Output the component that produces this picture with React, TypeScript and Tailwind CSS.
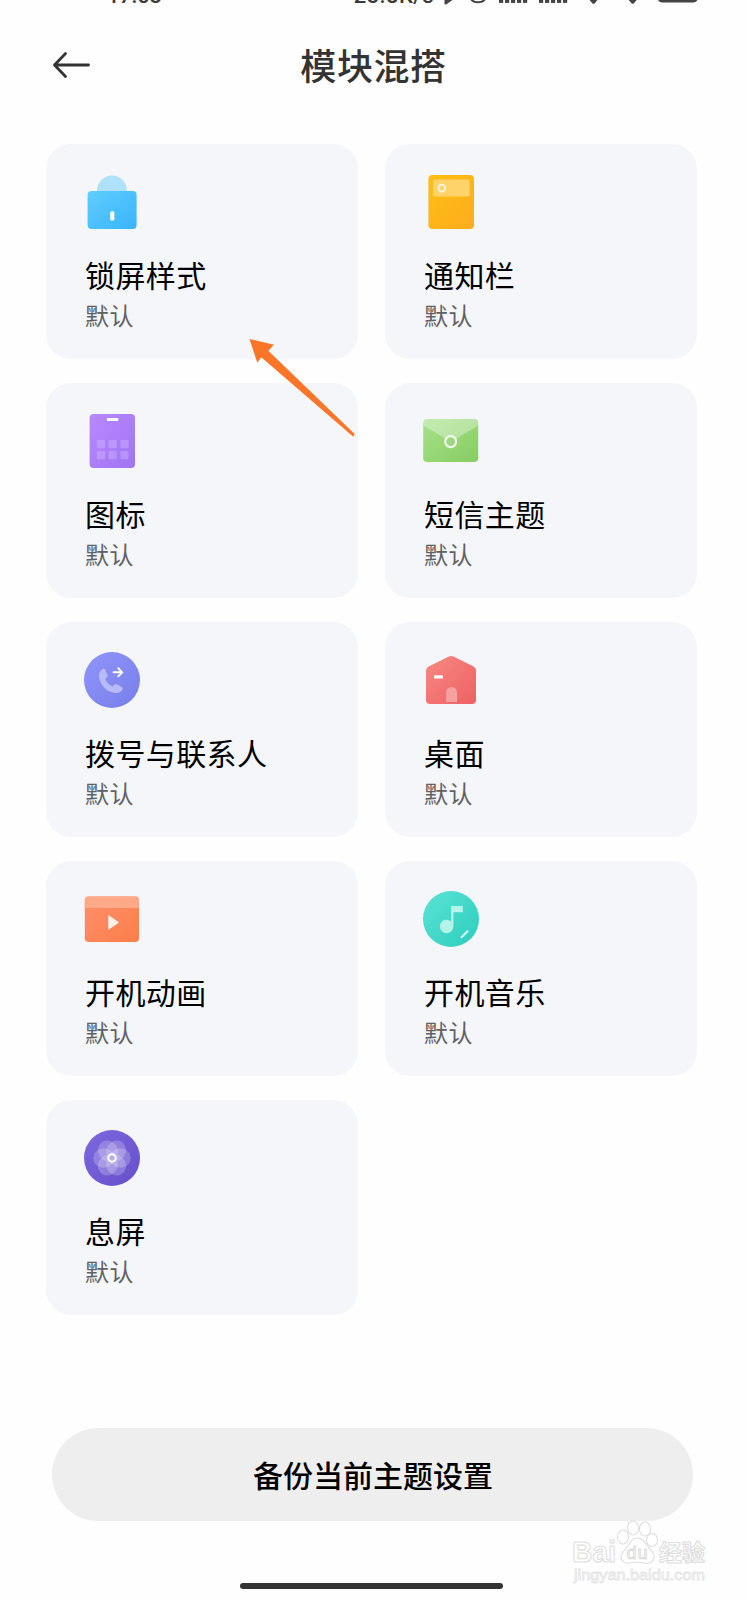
import type { ReactNode } from "react";

type Module = {
  title: string;
  icon: ReactNode;
};

const Icon = ({ children }: { children: ReactNode }) => (
  <svg viewBox="0 0 60 60" className="block h-[60px] w-[60px]">
    {children}
  </svg>
);

const Gradient = ({ id, from, to }: { id: string; from: string; to: string }) => (
  <linearGradient id={id} x1="0" y1="0" x2="1" y2="1">
    <stop offset="0" stopColor={from} />
    <stop offset="1" stopColor={to} />
  </linearGradient>
);

const LockIcon = () => (
  <Icon>
    <Gradient id="lock" from="#61cdfd" to="#38b4fc" />
    <path d="M15 19a15 15.5 0 0 1 30 0z" fill="#afe1fd" />
    <rect x="5.6" y="19" width="49" height="38" rx="4" fill="url(#lock)" />
    <rect x="28.2" y="39.2" width="4.2" height="9.4" rx="1.6" fill="#fff" />
  </Icon>
);

const NotificationIcon = () => (
  <Icon>
    <Gradient id="notice" from="#fdc013" to="#fdab1e" />
    <rect x="7.4" y="3" width="45.6" height="54" rx="4" fill="url(#notice)" />
    <rect x="12" y="7.4" width="36.6" height="17" rx="2" fill="#fed36b" />
    <circle cx="20.8" cy="16.2" r="3.4" fill="none" stroke="#fff4d8" strokeWidth="1.9" />
  </Icon>
);

const GridIcon = () => (
  <Icon>
    <Gradient id="grid" from="#b888fc" to="#a074f5" />
    <rect x="7.6" y="3" width="45.4" height="54" rx="4" fill="url(#grid)" />
    <rect x="24.8" y="7" width="11.6" height="2.9" rx="1" fill="#fff" />
    {[29, 40].map((y) =>
      [14.8, 26.6, 38.4].map((x) => (
        <rect key={`${x}-${y}`} x={x} y={y} width="8.2" height="8.2" rx="1" fill="#fff" opacity="0.2" />
      ))
    )}
  </Icon>
);

const MailIcon = () => (
  <Icon>
    <Gradient id="mail" from="#a7e289" to="#87cc63" />
    <rect x="2.2" y="8" width="55" height="43" rx="4" fill="url(#mail)" />
    <path d="M2.2 14.6V12a4 4 0 0 1 4-4h47a4 4 0 0 1 4 4v2.6L32 29.5a4 4 0 0 1-4.5 0z" fill="#fff" opacity="0.33" />
    <circle cx="29.7" cy="30.6" r="5.5" fill="#9dd580" stroke="#f2fbee" strokeWidth="2.1" />
  </Icon>
);

const PhoneIcon = () => (
  <Icon>
    <Gradient id="phone" from="#9095fc" to="#787ee8" />
    <circle cx="30" cy="30" r="28" fill="url(#phone)" />
    <path
      d="M21.3 18.8c-3.3 1.5-4.8 4.9-4.1 9 1.5 8.1 7.8 14.3 15.8 15.2 3.4.3 6.4-.8 7.6-3.4.5-1.2.1-2-.9-2.6l-5-2.7c-.9-.5-1.8-.3-2.5.4l-1.7 1.7c-3.3-1.2-6-4-7.5-7.3l1.9-1.9c.7-.7.8-1.5.4-2.4l-2.1-5.1c-.4-.9-1-1.3-1.9-.9z"
      fill="#b8bbfa"
    />
    <path d="M31.6 22.3h8.5M36.2 18.2l4.1 4.1-4.1 4.1" fill="none" stroke="#fff" strokeWidth="1.9" strokeLinecap="round" strokeLinejoin="round" />
  </Icon>
);

const HomeIcon = () => (
  <Icon>
    <Gradient id="home" from="#f88981" to="#ed6164" />
    <path d="M28 6.5a5.5 5.5 0 0 1 4.6 0l20 10A4.5 4.5 0 0 1 55 20.6V50a4 4 0 0 1-4 4H9a4 4 0 0 1-4-4V20.6a4.5 4.5 0 0 1 2.6-4.1z" fill="url(#home)" />
    <rect x="13" y="25.2" width="8.8" height="3.2" rx="0.5" fill="#fff" />
    <path d="M25 52V42.5a5.5 5.5 0 0 1 11 0V52z" fill="#f6a19f" />
  </Icon>
);

const VideoIcon = () => (
  <Icon>
    <Gradient id="video" from="#fd8f6b" to="#fd7e4a" />
    <rect x="2.8" y="7.6" width="54.2" height="45.4" rx="4" fill="url(#video)" />
    <path d="M2.8 19v-7.4a4 4 0 0 1 4-4H53a4 4 0 0 1 4 4V19z" fill="#fea988" />
    <path d="M26.2 27v12.8a.6.6 0 0 0 .9.5l9.400-6.400a.6.6 0 0 0 0-1l-9.400-6.400a.6.6 0 0 0-.9.5z" fill="#fff0ea" />
  </Icon>
);

const MusicIcon = () => (
  <Icon>
    <Gradient id="music" from="#5ce3d5" to="#2bcdbd" />
    <circle cx="30" cy="30" r="28" fill="url(#music)" />
    <path d="M30 17h11.8v6.2h-9.4v14.3a6.8 6.8 0 1 1-2.4-5.2z" fill="#b5f3e9" />
    <path d="M40.5 48.3l6-6" stroke="#dcfaf5" strokeWidth="2" strokeLinecap="round" />
  </Icon>
);

const FlowerIcon = () => (
  <Icon>
    <Gradient id="flower" from="#7e68df" to="#664fca" />
    <circle cx="30" cy="30" r="28" fill="url(#flower)" />
    {[0, 60, 120, 180, 240, 300].map((angle) => (
      <ellipse key={angle} cx="38.2" cy="30" rx="10.6" ry="9.8" fill="#fff" opacity="0.22" transform={`rotate(${angle} 30 30)`} />
    ))}
    <circle cx="30" cy="30" r="3.7" fill="#b8afe6" stroke="#fff" strokeWidth="1.9" />
  </Icon>
);

const modules: Module[] = [
  { title: "锁屏样式", icon: <LockIcon /> },
  { title: "通知栏", icon: <NotificationIcon /> },
  { title: "图标", icon: <GridIcon /> },
  { title: "短信主题", icon: <MailIcon /> },
  { title: "拨号与联系人", icon: <PhoneIcon /> },
  { title: "桌面", icon: <HomeIcon /> },
  { title: "开机动画", icon: <VideoIcon /> },
  { title: "开机音乐", icon: <MusicIcon /> },
  { title: "息屏", icon: <FlowerIcon /> },
];

const StatusBar = () => (
  <div className="flex h-[5px] items-end justify-between overflow-hidden pl-[107px] pr-[48px] text-[#3a3a3a]">
    <span className="mb-[-2px] font-['Roboto',sans-serif] text-[22px] leading-[22px] font-medium tracking-[-0.2px]">17:03</span>
    <div className="flex h-[5px] items-end">
      <span className="mr-[8px] mb-[-2px] font-['Roboto',sans-serif] text-[22px] leading-[22px] font-medium tracking-[0.4px]">23.8K/s</span>
      <svg viewBox="0 0 256 5" className="block h-[5px] w-[256px]" fill="#444">
        <path d="M2.5 0h8L4.5 4.200q-2 1-2-.7z" />
        <path d="M29-1a7.500 5 0 0 0 14 0" fill="none" stroke="#444" strokeWidth="2" />
        {[57, 63, 69, 75, 81, 97, 103, 109, 115, 121].map((x) => (
          <rect key={x} x={x} y="0" width="4.2" height="2.9" />
        ))}
        <path d="M147.5 0h8l-3 3.4q-1 .8-2 0z" />
        <path d="M186.700 0h8l-3 3.4q-1 .8-2 0z" />
        <path d="M216 0q1 2.4 4 2.4h31.5q3 0 4-2.4z" />
      </svg>
    </div>
  </div>
);

const ModuleCard = ({ title, icon }: Module) => (
  <div className="h-[215px] rounded-[25px] bg-[#f4f6fa] pt-[28px] pl-[36px]">
    {icon}
    <p className="mt-[22px] pl-[3px] text-[30px] leading-[40px] tracking-[0.4px] text-black">{title}</p>
    <p className="mt-px pl-[3px] text-[24px] leading-[40px] tracking-[0.4px] text-[#606164]">默认</p>
  </div>
);

const Watermark = () => (
  <div className="absolute top-[1518px] left-[570px] h-[72px] w-[146px]">
    <svg viewBox="0 0 146 72" className="block h-full w-full">
      <g fill="#fff" stroke="#dedede" strokeWidth="1.1">
        <text x="2" y="44" fontSize="30" fontWeight="700" fontFamily="Liberation Sans, sans-serif" textLength="44" lengthAdjust="spacingAndGlyphs">Bai</text>
        <ellipse cx="53" cy="19" rx="5.5" ry="7" />
        <ellipse cx="63" cy="10" rx="5.5" ry="7" />
        <ellipse cx="75" cy="11" rx="5.5" ry="7" />
        <ellipse cx="82" cy="22" rx="5.5" ry="6.5" />
        <path d="M67 20c6 0 8 5 12 10 4 4 6 7 5 10-1 4-5 6-9 5-5-1-10-1-15 0-5 1-9-2-9-6 0-4 4-7 7-11 3-4 4-8 9-8z" />
        <text x="56.5" y="41" fontSize="18" fontFamily="Liberation Sans, sans-serif" textLength="21">du</text>
        <text x="89" y="43" fontSize="23" fontWeight="700" fontFamily="Noto Sans CJK SC, sans-serif">经验</text>
      </g>
      <text x="4" y="62" fontSize="15" fill="#fff" stroke="#e4e4e4" strokeWidth="0.8" fontFamily="Liberation Sans, sans-serif" textLength="131" lengthAdjust="spacingAndGlyphs">
        jingyan.baidu.com
      </text>
    </svg>
  </div>
);

export default function App() {
  return (
    <main className="relative flex h-[1600px] w-[746px] flex-col overflow-hidden bg-[#fefefe] font-['Noto_Sans_CJK_SC',sans-serif]">
      <StatusBar />
      <header className="grid h-[139px] grid-cols-[1fr_auto_1fr] items-start pt-[33px] pl-[52px] pr-[51px]">
        <svg viewBox="0 0 40 30" className="mt-[12px] block h-[30px] w-[40px]">
          <path d="M13.5 3.5L2.5 15l11 11.5M2.5 15H36.5" fill="none" stroke="#333" strokeWidth="2.8" strokeLinecap="round" strokeLinejoin="round" />
        </svg>
        <h1 className="text-[36px] leading-[52px] font-medium tracking-[0.6px] text-[#333]">模块混搭</h1>
      </header>
      <section className="ml-[46px] grid w-[651.400px] grid-cols-[312.4px_312.4px] justify-between gap-y-[24px]">
        {modules.map((item) => (
          <ModuleCard key={item.title} {...item} />
        ))}
      </section>
      <button className="mt-[113px] ml-[52.4px] h-[93px] w-[641px] rounded-full bg-[#eee] text-[30px] font-medium text-black">
        备份当前主题设置
      </button>
      <div className="mt-[62px] ml-[240px] h-[6px] w-[263px] rounded-full bg-[#333]" />

      {/* pointer to the lock screen card */}
      <svg viewBox="0 0 108 100" className="absolute top-[338px] left-[248px] h-[100px] w-[108px]">
        <path d="M1.5 1L26 6.7l-5.7 6 86.4 83.3-1.4 2.7-92-79.4-4 5.4z" fill="#fb7529" />
      </svg>
      <Watermark />
    </main>
  );
}
